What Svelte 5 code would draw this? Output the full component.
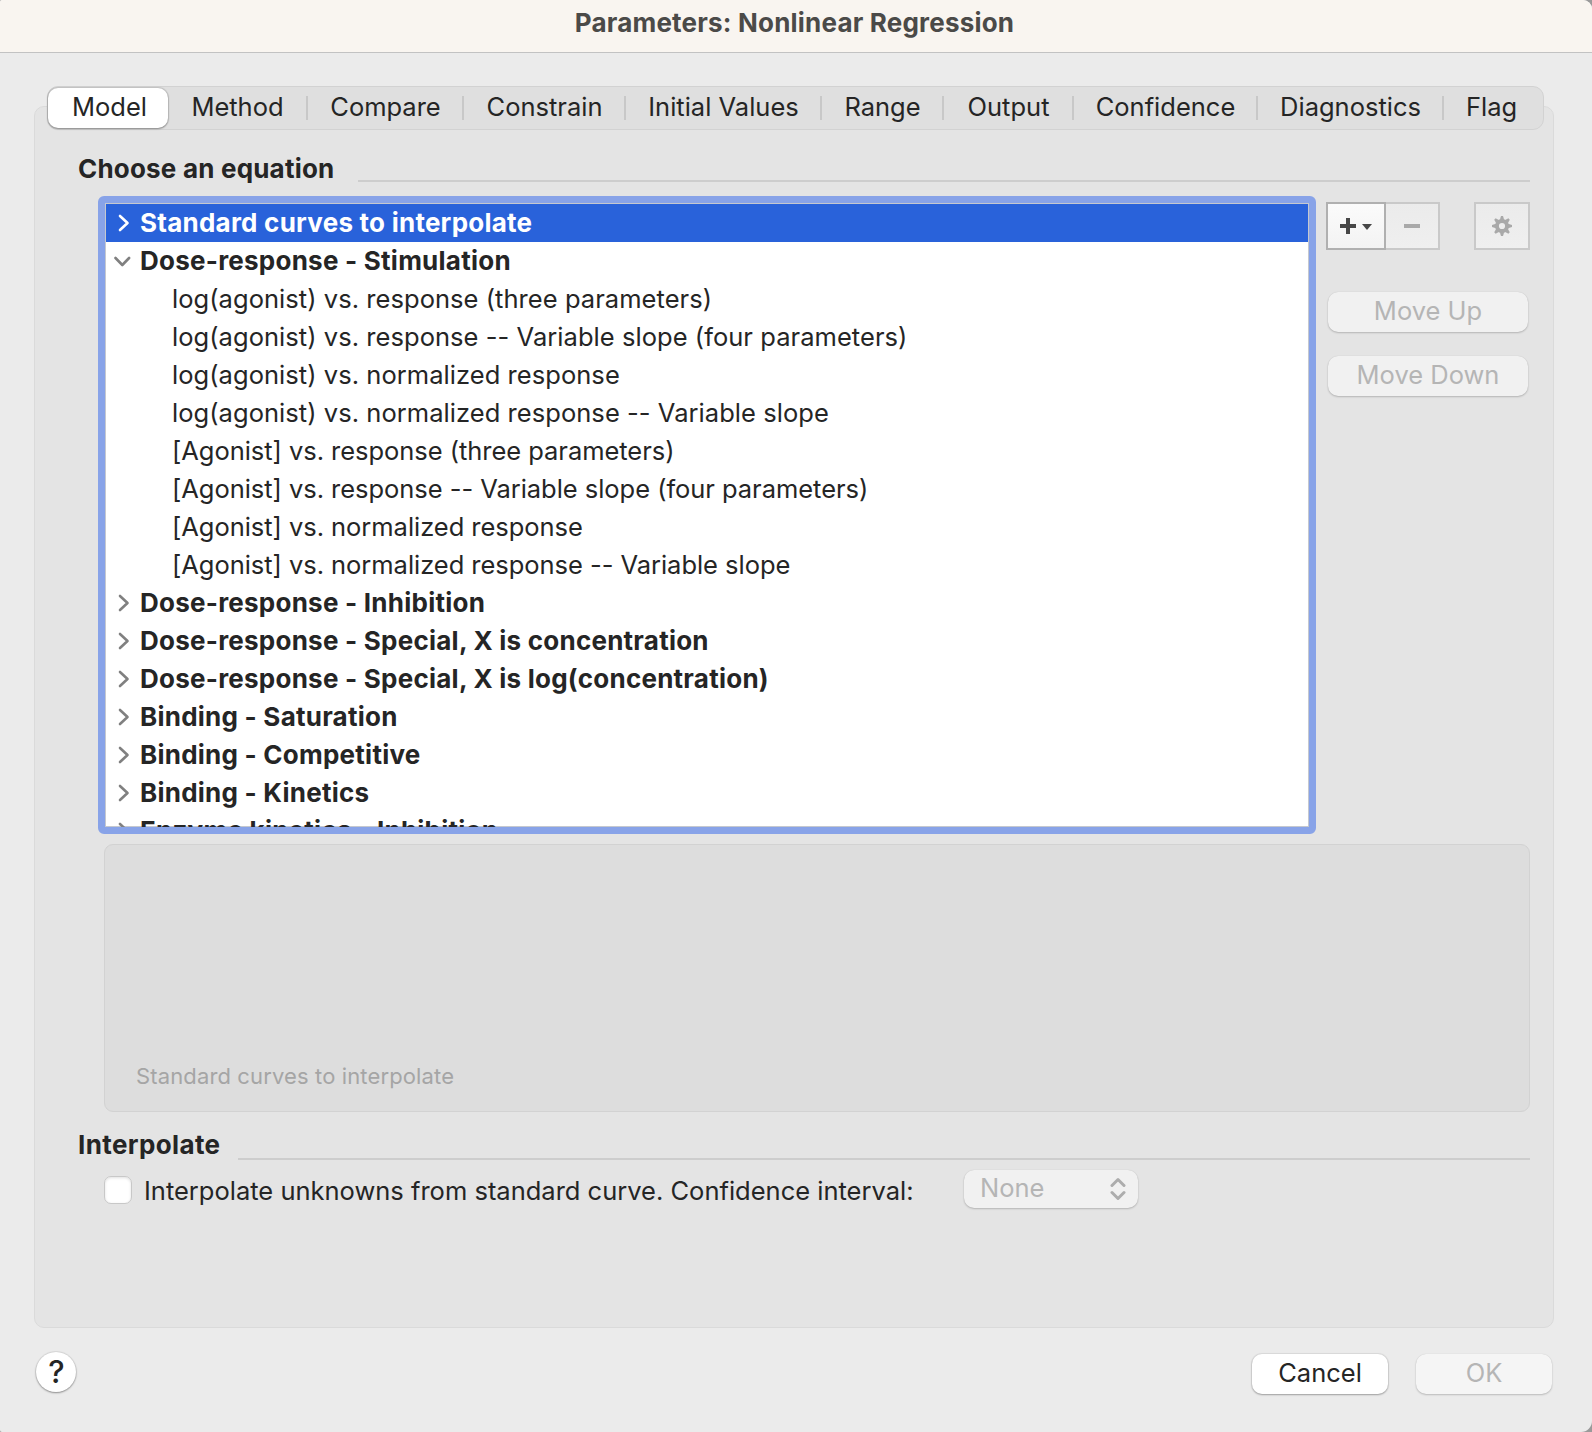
<script lang="ts">
	type Group = { name: string; open?: boolean; items?: string[] };

	const tabs = [
		{ name: 'Model', width: 120 },
		{ name: 'Method', width: 140 },
		{ name: 'Compare', width: 156 },
		{ name: 'Constrain', width: 162 },
		{ name: 'Initial Values', width: 196 },
		{ name: 'Range', width: 122 },
		{ name: 'Output', width: 130 },
		{ name: 'Confidence', width: 184 },
		{ name: 'Diagnostics', width: 186 },
		{ name: 'Flag', width: 96 }
	];

	const groups: Group[] = [
		{ name: 'Standard curves to interpolate' },
		{
			name: 'Dose-response - Stimulation',
			open: true,
			items: [
				'log(agonist) vs. response (three parameters)',
				'log(agonist) vs. response -- Variable slope (four parameters)',
				'log(agonist) vs. normalized response',
				'log(agonist) vs. normalized response -- Variable slope',
				'[Agonist] vs. response (three parameters)',
				'[Agonist] vs. response -- Variable slope (four parameters)',
				'[Agonist] vs. normalized response',
				'[Agonist] vs. normalized response -- Variable slope'
			]
		},
		{ name: 'Dose-response - Inhibition' },
		{ name: 'Dose-response - Special, X is concentration' },
		{ name: 'Dose-response - Special, X is log(concentration)' },
		{ name: 'Binding - Saturation' },
		{ name: 'Binding - Competitive' },
		{ name: 'Binding - Kinetics' },
		{ name: 'Enzyme kinetics - Inhibition' }
	];

	let activeTab = $state('Model');
	let selected = $state('Standard curves to interpolate');
	let interpolate = $state(false);
</script>

<div class="window">
	<header class="titlebar">Parameters: Nonlinear Regression</header>

	<main class="panel">
		<nav class="tabs">
			{#each tabs as tab, i (tab.name)}
				<button
					class="tab"
					class:active={activeTab === tab.name}
					class:divided={i > 0 && i < tabs.length - 1}
					style:width="{tab.width}px"
					onclick={() => (activeTab = tab.name)}
				>
					{tab.name}
				</button>
			{/each}
		</nav>

		<div class="heading equation-heading">
			<h2>Choose an equation</h2>
			<span class="rule"></span>
		</div>

		<div class="equation">
			<div class="list">
				{#each groups as group (group.name)}
					<button class="row group" class:selected={selected === group.name} onclick={() => (selected = group.name)}>
						<svg class="chevron" viewBox="0 0 18 18">
							{#if group.open}
								<path d="M1.5 6l6.8 7 6.8-7" />
							{:else}
								<path d="M6 2l7.5 7L6 16" />
							{/if}
						</svg>
						<span>{group.name}</span>
					</button>
					{#if group.open && group.items}
						{#each group.items as item (item)}
							<button class="row item" class:bracketed={item.startsWith('[')} onclick={() => (selected = item)}>
								{item}
							</button>
						{/each}
					{/if}
				{/each}
			</div>

			<div class="side">
				<div class="tools">
					<button class="tool add" aria-label="Add">
						<svg width="34" height="18" viewBox="0 0 34 18">
							<path d="M7 1h4v6h6v4h-6v6H7v-6H1V7h6z" />
							<path d="M23 7h10l-5 6z" />
						</svg>
					</button>
					<button class="tool remove" aria-label="Remove" disabled>
						<svg width="18" height="18" viewBox="0 0 18 18">
							<path d="M1 7h16v4H1z" />
						</svg>
					</button>
					<button class="tool settings" aria-label="Settings" disabled>
						<svg width="20" height="20" viewBox="-10 -10 20 20">
							<circle r="5" fill="none" stroke="#a9a9a9" stroke-width="3.8" />
							{#each [0, 45, 90, 135, 180, 225, 270, 315] as angle (angle)}
								<path d="M-2.2-6L-1-10H1L2.2-6z" transform="rotate({angle})" />
							{/each}
						</svg>
					</button>
				</div>
				<button class="push move" disabled>Move Up</button>
				<button class="push move" disabled>Move Down</button>
			</div>
		</div>

		<div class="preview">{selected}</div>

		<div class="heading interpolate-heading">
			<h2>Interpolate</h2>
			<span class="rule"></span>
		</div>

		<div class="options">
			<label>
				<input type="checkbox" bind:checked={interpolate} />
				<span>Interpolate unknowns from standard curve. Confidence interval:</span>
			</label>
			<button class="push popup" disabled>
				<span>None</span>
				<svg width="16" height="24" viewBox="0 0 16 24">
					<path d="M2 8.5l6-6 6 6M2 15.5l6 6 6-6" />
				</svg>
			</button>
		</div>
	</main>

	<footer>
		<button class="help" aria-label="Help">?</button>
		<button class="push cancel">Cancel</button>
		<button class="push ok" disabled>OK</button>
	</footer>
</div>

<style>
	:global(body) {
		background: #9a9a9a;
	}

	.window {
		box-sizing: border-box;
		width: 1592px;
		height: 1432px;
		overflow: hidden;
		border-radius: 2px 9px 11px 2px;
		background: #ebebeb;
		color: #252525;
		font-family: Inter, 'Liberation Sans', sans-serif;
		font-size: 25.5px;
		line-height: 38px;
	}

	button {
		box-sizing: border-box;
		margin: 0;
		padding: 0;
		border: 0;
		background: none;
		color: inherit;
		font: inherit;
		letter-spacing: inherit;
		white-space: nowrap;
	}

	.titlebar {
		box-sizing: border-box;
		height: 53px;
		padding: 4px 3px 0 0;
		border-bottom: 1px solid #c2c2c2;
		background: #f9f5f0;
		color: #4b4a48;
		font-size: 26px;
		font-weight: 700;
		letter-spacing: 0.2px;
		text-align: center;
	}

	.panel {
		box-sizing: border-box;
		width: 1520px;
		height: 1222px;
		margin: 53px 0 0 34px;
		border: 1px solid #dadada;
		border-radius: 10px;
		background: #e4e4e4;
	}

	.tabs {
		display: flex;
		box-sizing: border-box;
		width: 1497px;
		height: 44px;
		margin: -21px 0 0 12px;
		border: 1px solid #d2d2d2;
		border-radius: 11px;
		background: #dfdfdf;
	}

	.tab {
		display: flex;
		flex: none;
		align-items: center;
		justify-content: center;
		height: 42px;
		padding: 0 1px 3px 0;
	}

	.tab.active {
		height: 40px;
		margin-top: 1px;
		padding: 0 0 2px 3px;
		border-radius: 10px;
		background: #fff;
		box-shadow: 0 0 1px 1px rgb(0 0 0 / 12%), 0 1px 2px rgb(0 0 0 / 30%);
	}

	.tab.divided {
		background: linear-gradient(#c8c8c8, #c8c8c8) right 9px / 2px 24px no-repeat;
	}

	.heading {
		display: flex;
		align-items: flex-end;
		margin: 0 23px 0 43px;
	}

	h2 {
		box-sizing: border-box;
		margin: 0;
		font-size: 26px;
		font-weight: 700;
		letter-spacing: 0.2px;
	}

	.rule {
		flex: 1;
		height: 2px;
		background: #cdcdcd;
	}

	.equation-heading {
		height: 52px;
	}

	.equation-heading h2 {
		width: 280px;
		height: 52px;
		padding-top: 20px;
	}

	.equation {
		display: flex;
		gap: 10px;
		height: 638px;
		margin: 14px 0 0 63px;
	}

	.list {
		box-sizing: border-box;
		width: 1218px;
		height: 638px;
		padding: 1px;
		overflow: hidden;
		border: 7px solid #88a3e8;
		border-radius: 6px;
		background: #fff;
		background-clip: padding-box;
		box-shadow: inset 0 0 0 1px #c5c8cf;
	}

	.row {
		display: flex;
		align-items: center;
		width: 100%;
		height: 38px;
	}

	.group {
		gap: 8px;
		padding-left: 8px;
		font-size: 26px;
		font-weight: 700;
		letter-spacing: 0.24px;
	}

	.item {
		padding-left: 66px;
		letter-spacing: 0.05px;
	}

	.item.bracketed {
		letter-spacing: -0.04px;
	}

	.selected {
		background: #2962da;
		color: #fff;
	}

	.chevron {
		width: 18px;
		height: 18px;
		fill: none;
		stroke: #808080;
		stroke-width: 2.6;
		stroke-linecap: round;
		stroke-linejoin: round;
	}

	.selected .chevron {
		stroke: #fff;
	}

	.side {
		padding-top: 6px;
	}

	.tools {
		display: flex;
		width: 204px;
		margin-bottom: 42px;
	}

	.tool {
		display: flex;
		align-items: center;
		justify-content: center;
		height: 48px;
		border: 2px solid #c9c9c9;
		background: linear-gradient(#ebebeb, #efefef);
	}

	.tool svg {
		fill: #a9a9a9;
	}

	.add {
		width: 60px;
		border-color: #b0b0b0;
		background: linear-gradient(#fbfbfb, #f3f3f3);
	}

	.add svg {
		fill: #474747;
	}

	.remove {
		width: 54px;
		border-left: 0;
	}

	.settings {
		width: 56px;
		margin-left: auto;
	}

	.push {
		display: block;
		height: 40px;
		padding-bottom: 2px;
		border-radius: 10px;
		background: #fff;
		box-shadow: 0 0 1px 1px rgb(0 0 0 / 7%), 0 1px 2px rgb(0 0 0 / 28%);
		text-align: center;
	}

	.push:disabled {
		background: #f1f1f1;
		color: #b5b5b5;
		box-shadow: 0 0 1px rgb(0 0 0 / 14%), 0 1px 2px rgb(0 0 0 / 20%);
	}

	.move {
		width: 200px;
		margin: 0 0 24px 2px;
	}

	.preview {
		display: flex;
		align-items: flex-end;
		box-sizing: border-box;
		width: 1426px;
		height: 268px;
		margin: 10px 0 0 69px;
		padding: 0 0 16px 31px;
		border: 1px solid #d2d2d2;
		border-radius: 9px;
		background: #ddd;
		color: #a5a5a5;
		font-size: 22px;
		letter-spacing: 0.13px;
	}

	.interpolate-heading {
		height: 48px;
	}

	.interpolate-heading h2 {
		width: 160px;
		height: 48px;
		padding-top: 14px;
		letter-spacing: 0.38px;
	}

	.options {
		display: flex;
		margin: 10px 0 0 69px;
	}

	label {
		display: flex;
		gap: 12px;
		width: 860px;
		white-space: nowrap;
	}

	label span {
		padding-top: 2px;
	}

	input {
		appearance: none;
		box-sizing: border-box;
		flex: none;
		width: 28px;
		height: 28px;
		margin: 6px 0 0;
		border: 1px solid #c8c8c8;
		border-radius: 7px;
		background: #fff;
		box-shadow: inset 0 1px 3px rgb(0 0 0 / 12%);
	}

	.popup {
		display: flex;
		align-items: center;
		justify-content: space-between;
		width: 174px;
		height: 38px;
		padding: 0 12px 0 16px;
	}

	.popup span {
		padding-bottom: 2px;
	}

	.popup svg {
		fill: none;
		stroke: #adadad;
		stroke-width: 3;
		stroke-linecap: round;
		stroke-linejoin: round;
	}

	footer {
		display: flex;
		margin: 26px 40px 0 36px;
	}

	.help {
		width: 40px;
		height: 40px;
		margin: -2px auto 0 0;
		padding-left: 1px;
		border-radius: 50%;
		background: #fff;
		box-shadow: 0 0 1px 1px rgb(0 0 0 / 8%), 0 1px 2px rgb(0 0 0 / 35%);
		font-size: 31px;
		font-weight: 500;
	}

	.cancel,
	.ok {
		width: 136px;
	}

	.ok {
		margin-left: 28px;
	}

	.ok:disabled {
		background: #f5f5f5;
	}
</style>
